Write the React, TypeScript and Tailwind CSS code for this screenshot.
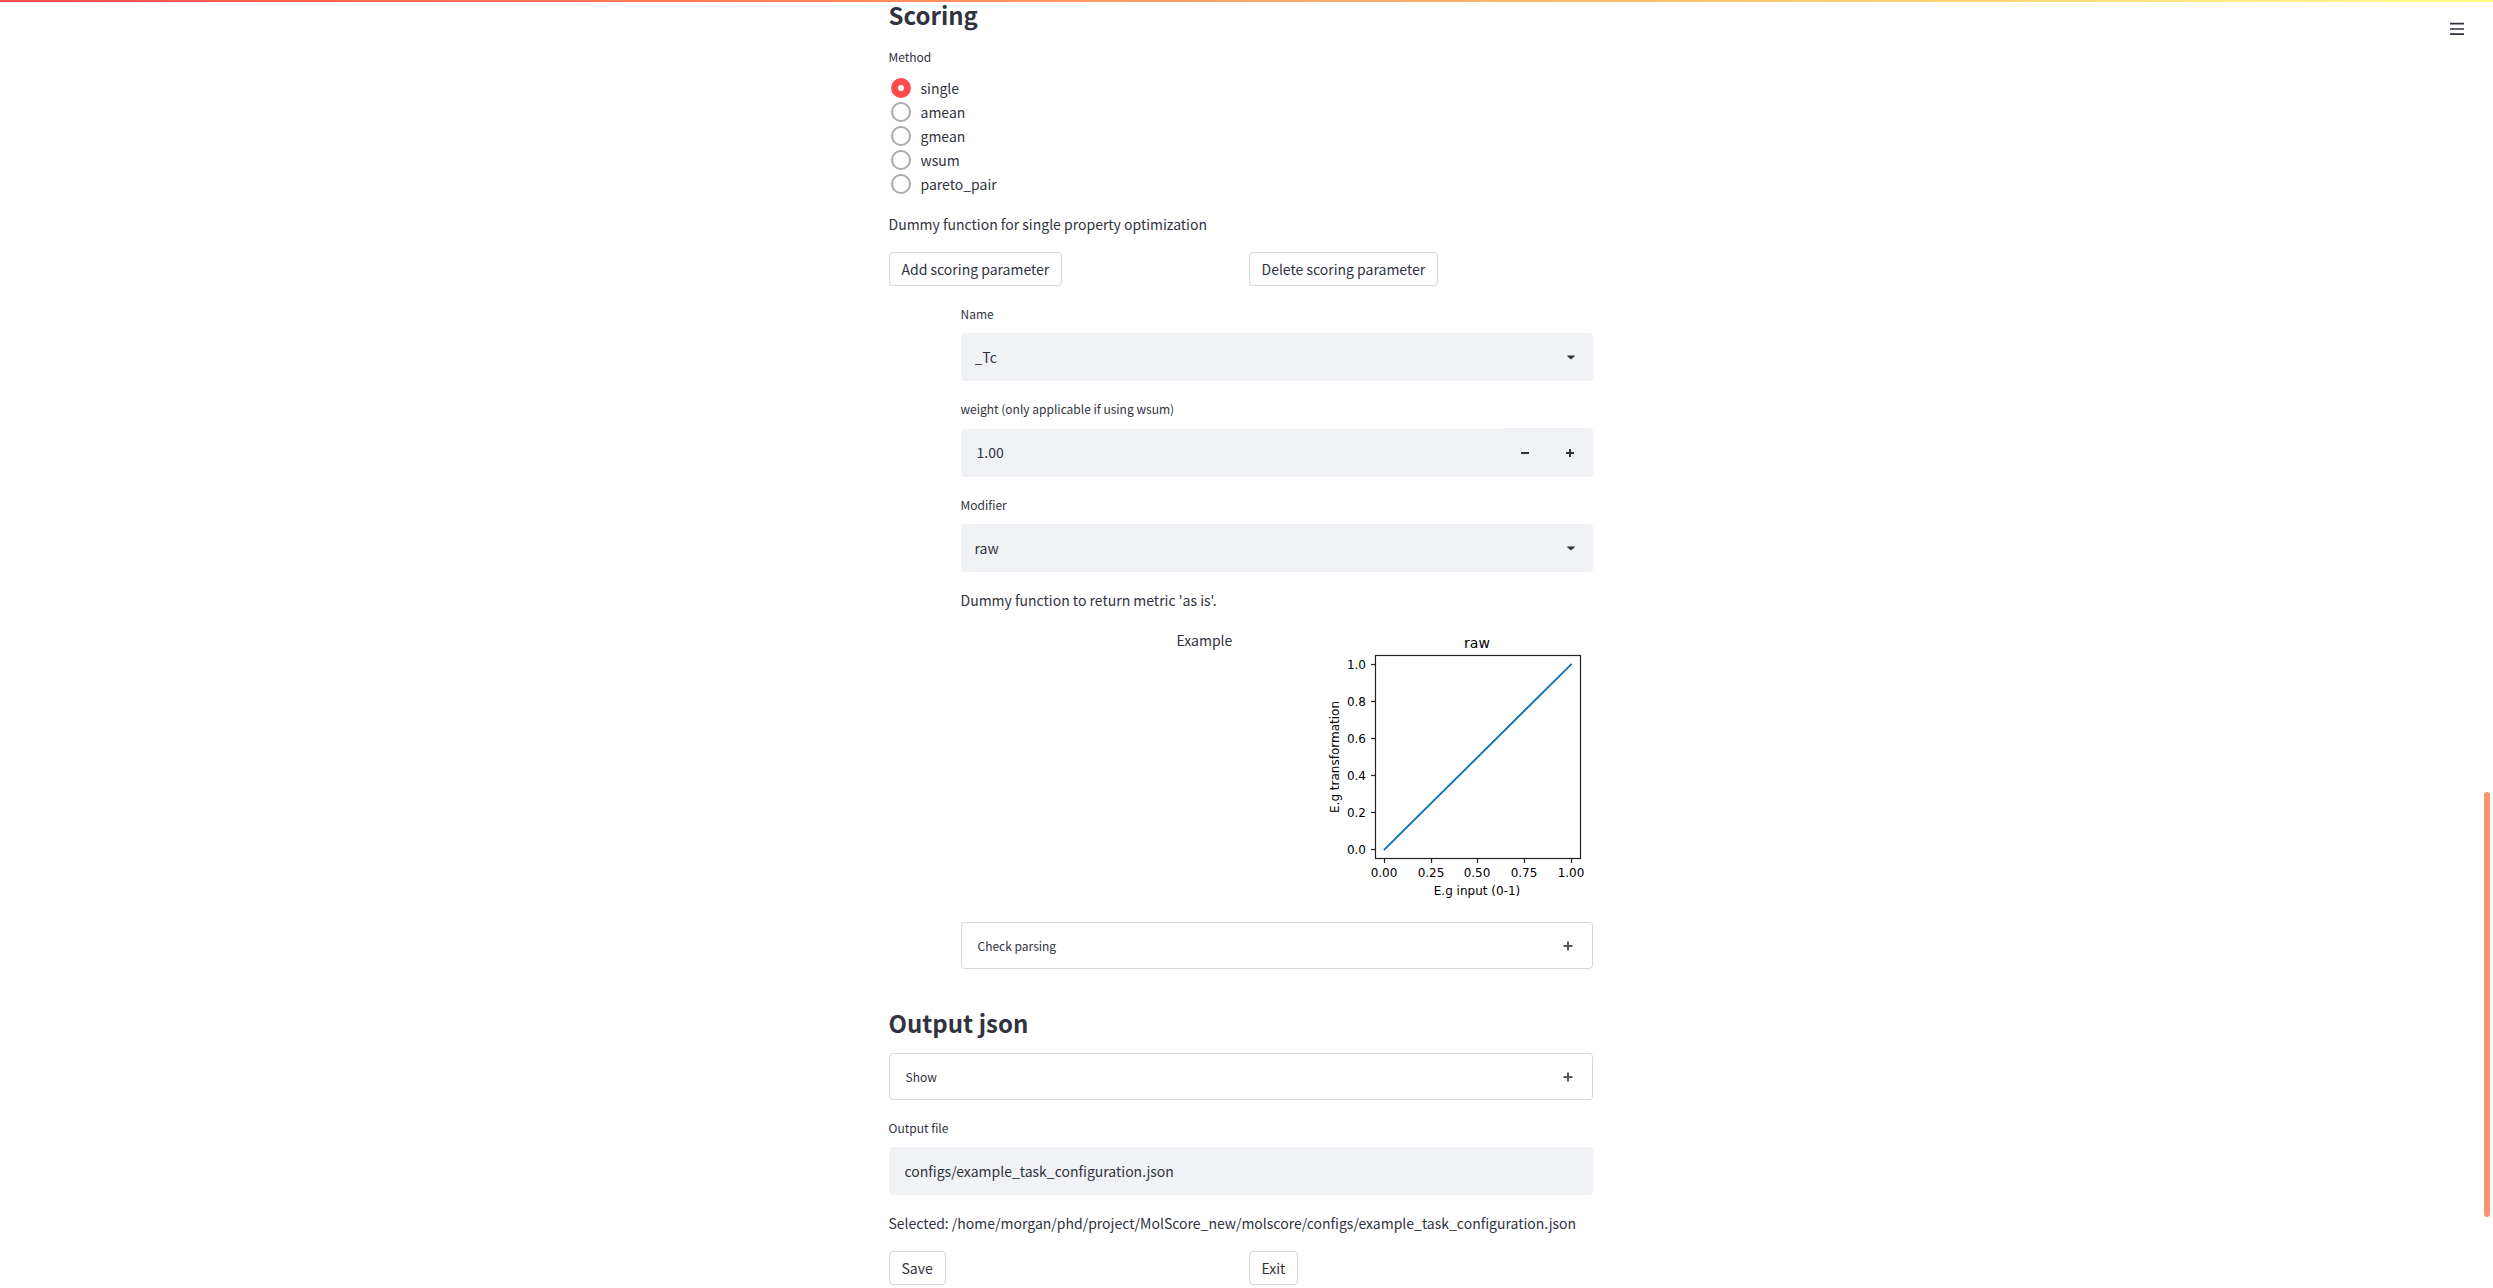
import { useState } from "react";
import type { ReactNode } from "react";

const METHODS = ["single", "amean", "gmean", "wsum", "pareto_pair"];

const X_TICKS = [
  { at: 63, label: "0.00" },
  { at: 110, label: "0.25" },
  { at: 156, label: "0.50" },
  { at: 203, label: "0.75" },
  { at: 250, label: "1.00" },
];

const Y_TICKS = [
  { at: 221, label: "0.0" },
  { at: 184, label: "0.2" },
  { at: 147, label: "0.4" },
  { at: 110, label: "0.6" },
  { at: 73, label: "0.8" },
  { at: 36, label: "1.0" },
];

function Label({ htmlFor, children }: { htmlFor: string; children: ReactNode }) {
  return (
    <label htmlFor={htmlFor} className="mb-[7px] block text-[12px] leading-6">
      {children}
    </label>
  );
}

function Button({ children }: { children: ReactNode }) {
  return (
    <button
      type="button"
      className="h-[34px] rounded border border-[#d6d6d9] bg-white px-3 text-[14px] leading-6"
    >
      {children}
    </button>
  );
}

function SelectField({ id, label, options }: { id: string; label: string; options: string[] }) {
  return (
    <div>
      <Label htmlFor={id}>{label}</Label>
      <div className="relative">
        <select
          id={id}
          className="block h-12 w-full appearance-none rounded bg-[#f0f2f6] pr-10 pl-[14px] text-[14px] leading-6"
        >
          {options.map((option) => (
            <option key={option}>{option}</option>
          ))}
        </select>
        <svg
          viewBox="0 0 8 8"
          className="pointer-events-none absolute top-5 right-[18px] h-2 w-2"
          aria-hidden="true"
        >
          <path d="M0.6 2.4h6.8c.5 0 .6.5.3.8L4.6 5.900a.8.8 0 0 1-1.200 0L.3 3.200C0 2.900.1 2.400 .6 2.400z" fill="#31333f" />
        </svg>
      </div>
    </div>
  );
}

function Expander({ title }: { title: string }) {
  return (
    <button
      type="button"
      aria-expanded="false"
      className="flex h-[47px] w-full items-center justify-between rounded border border-[#d6d6d9] bg-white pr-[19px] pl-4 text-left text-[12px] leading-6"
    >
      {title}
      <svg viewBox="0 0 10 10" className="h-[10px] w-[10px]" aria-hidden="true">
        <path d="M5 .5v9M.5 5h9" stroke="#555763" strokeWidth="2" />
      </svg>
    </button>
  );
}

function TransformationChart() {
  return (
    <svg
      viewBox="0 0 272 278"
      className="h-[278px] w-[272px] font-['DejaVu_Sans',sans-serif]"
      role="img"
      aria-label="raw transformation"
      fill="#000"
    >
      <text x="156" y="20" fontSize="14" textAnchor="middle">
        raw
      </text>
      <rect x="54.500" y="27.500" width="205" height="203" fill="none" stroke="#222" strokeWidth="1.200" />
      {Y_TICKS.map((tick) => (
        <g key={tick.label}>
          <path d={`M50 ${tick.at + 0.5}h4`} stroke="#222" strokeWidth="1.200" />
          <text x="45" y={tick.at + 5} fontSize="12" textAnchor="end">
            {tick.label}
          </text>
        </g>
      ))}
      {X_TICKS.map((tick) => (
        <g key={tick.label}>
          <path d={`M${tick.at + 0.5} 231v4`} stroke="#222" strokeWidth="1.200" />
          <text x={tick.at} y="249" fontSize="12" textAnchor="middle">
            {tick.label}
          </text>
        </g>
      ))}
      <path d="M63.500 221.500L250 36.500" stroke="#0f73b6" strokeWidth="1.900" strokeLinecap="square" />
      <text x="156" y="267" fontSize="12" textAnchor="middle">
        E.g input (0-1)
      </text>
      <text transform="translate(18 129) rotate(-90)" fontSize="12" textAnchor="middle">
        E.g transformation
      </text>
    </svg>
  );
}

export default function App() {
  const [method, setMethod] = useState("single");
  const [weight, setWeight] = useState(1);
  const [outputFile, setOutputFile] = useState("configs/example_task_configuration.json");

  return (
    <div className="min-h-screen bg-white pr-3 font-['Noto_Sans_CJK_SC',sans-serif] text-[14px] leading-6 text-[#31333f]">
      <div className="fixed inset-x-0 top-0 z-10 h-[2px] bg-linear-to-r/srgb from-[#ff4b4b] to-[#fffd80]" />
      <button type="button" aria-label="Main menu" className="fixed top-[19px] right-[26px] z-10 p-[3px]">
        <svg viewBox="0 0 14 14" className="h-[14px] w-[14px]" aria-hidden="true">
          <path d="M0 1.600h14M0 7h14M0 12.200h14" stroke="#31333f" strokeWidth="1.700" />
        </svg>
      </button>
      <div className="fixed top-[792px] right-[3px] h-[425px] w-[6px] rounded-full bg-[#f6946b]" />

      <main className="mx-auto flex max-w-[704px] flex-col gap-4">
        <section className="flex flex-col gap-4">
          <h2 className="pt-px text-[24px] leading-7 font-bold">Scoring</h2>
          <fieldset>
            <legend className="mb-[7px] text-[12px] leading-6">Method</legend>
            {METHODS.map((name) => (
              <label key={name} className="flex items-center gap-[10px] pl-[2px]">
                <input
                  type="radio"
                  name="method"
                  value={name}
                  checked={method === name}
                  onChange={() => setMethod(name)}
                  className="h-5 w-5 appearance-none rounded-full border-2 border-[#a9aab0] bg-white checked:border-[7px] checked:border-[#ff4b4b]"
                />
                {name}
              </label>
            ))}
          </fieldset>
          <p>Dummy function for single property optimization</p>
          <div className="grid grid-cols-2 gap-4">
            <div>
              <Button>Add scoring parameter</Button>
            </div>
            <div>
              <Button>Delete scoring parameter</Button>
            </div>
          </div>

          <div className="flex flex-col gap-4 pl-[72px]">
            <SelectField id="parameter-name" label="Name" options={["_Tc"]} />
            <div>
              <Label htmlFor="weight">weight (only applicable if using wsum)</Label>
              <div className="flex items-end">
                <input
                  id="weight"
                  type="text"
                  inputMode="decimal"
                  readOnly
                  value={weight.toFixed(2)}
                  className="h-12 min-w-0 flex-1 rounded-l bg-[#f0f2f6] px-4 pb-[2px] text-[14px] leading-6"
                />
                <button
                  type="button"
                  aria-label="Decrease weight"
                  onClick={() => setWeight(weight - 0.01)}
                  className="flex h-[49px] w-[45px] items-center justify-center bg-[#f0f2f6]"
                >
                  <svg viewBox="0 0 8 8" className="h-2 w-2" aria-hidden="true">
                    <path d="M0 4h8" stroke="#31333f" strokeWidth="2" />
                  </svg>
                </button>
                <button
                  type="button"
                  aria-label="Increase weight"
                  onClick={() => setWeight(weight + 0.01)}
                  className="flex h-[49px] w-[45px] items-center justify-center rounded-r bg-[#f0f2f6]"
                >
                  <svg viewBox="0 0 8 8" className="h-2 w-2" aria-hidden="true">
                    <path d="M0 4h8M4 0v8" stroke="#31333f" strokeWidth="2" />
                  </svg>
                </button>
              </div>
            </div>
            <SelectField id="modifier" label="Modifier" options={["raw"]} />
            <p>Dummy function to return metric 'as is'.</p>
            <div className="flex justify-end gap-4">
              <p className="w-32">Example</p>
              <TransformationChart />
            </div>
            <Expander title="Check parsing" />
          </div>
        </section>

        <section className="flex flex-col gap-4 pt-6">
          <h2 className="text-[24px] leading-7 font-bold">Output json</h2>
          <Expander title="Show" />
          <div>
            <Label htmlFor="output-file">Output file</Label>
            <input
              id="output-file"
              type="text"
              value={outputFile}
              onChange={(event) => setOutputFile(event.target.value)}
              className="block h-12 w-full rounded bg-[#f0f2f6] px-4 text-[14px] leading-6"
            />
          </div>
          <p className="whitespace-nowrap">
            Selected: /home/morgan/phd/project/MolScore_new/molscore/{outputFile}
          </p>
          <div className="grid grid-cols-2 gap-4">
            <div>
              <Button>Save</Button>
            </div>
            <div>
              <Button>Exit</Button>
            </div>
          </div>
        </section>
      </main>
    </div>
  );
}
